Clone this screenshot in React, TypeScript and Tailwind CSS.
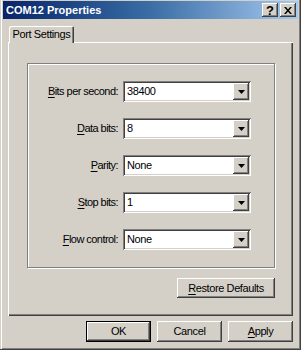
const raised =
  "bg-[#d4d0c8] shadow-[inset_-1px_-1px_#404040,inset_1px_1px_#ffffff,inset_-2px_-2px_#808080]"
const sunken =
  "bg-white shadow-[inset_1px_1px_#808080,inset_-1px_-1px_#ffffff,inset_2px_2px_#404040,inset_-2px_-2px_#d4d0c8]"

const font = { fontFamily: '"Liberation Sans", Arial, sans-serif' }

const Combo = ({ value }: { value: string }) => (
  <div className={`w-[128px] h-[21px] flex items-center p-[2px] ${sunken}`}>
    <span className="flex-1 pl-[2px] text-[11px] tracking-[-0.4px] leading-none text-black">{value}</span>
    <div className={`w-[16px] h-[17px] flex items-center justify-center ${raised}`}>
      <svg width="7" height="4" viewBox="0 0 7 4">
        <path d="M0 0h7L3.5 4z" fill="#000" />
      </svg>
    </div>
  </div>
)

const Row = ({ label, hot, value }: { label: string; hot: string; value: string }) => (
  <div className="flex items-center h-[21px]">
    <div className="w-[90px] text-right text-[11px] tracking-[-0.55px] leading-none text-black">
      <span className="underline underline-offset-2">{hot}</span>
      {label}
    </div>
    <div className="ml-[5px]">
      <Combo value={value} />
    </div>
  </div>
)

const Btn = ({ children, def }: { children: React.ReactNode; def?: boolean }) => (
  <div
    className={`w-[65px] h-[21px] flex items-center justify-center text-[11px] tracking-[-0.4px] text-black ${
      def
        ? "bg-[#d4d0c8] shadow-[inset_0_0_0_1px_#000000,inset_-2px_-2px_#404040,inset_2px_2px_#ffffff,inset_-3px_-3px_#808080]"
        : raised
    }`}
  >
    {children}
  </div>
)

export default function App() {
  return (
    <div
      className="w-[301px] h-[350px] bg-[#d4d0c8] flex flex-col pt-[1px] px-[3px] shadow-[inset_-1px_-1px_#404040,inset_1px_0_#d4d0c8,inset_2px_0_#ffffff,inset_-2px_-2px_#808080]"
      style={font}
    >
      {/* title bar */}
      <div className="h-[18px] flex items-center bg-gradient-to-r from-[#0a246a] via-[#3a6ea5] to-[#a6caf0] pl-[3px] pr-[2px]">
        <span className="flex-1 text-white font-bold text-[11px] leading-none">COM12 Properties</span>
        <div className={`w-[16px] h-[14px] flex items-center justify-center text-[13px] font-bold leading-none text-black ${raised}`}>
          ?
        </div>
        <div className={`ml-[2px] w-[16px] h-[14px] flex items-center justify-center ${raised}`}>
          <svg width="8" height="7" viewBox="0 0 8 7">
            <path d="M0 0h2l2 2.5L6 0h2L5 3.5 8 7H6L4 4.5 2 7H0l3-3.5z" fill="#000" />
          </svg>
        </div>
      </div>

      <div className="flex flex-col px-[5px]">
        {/* tab */}
        <div className="flex mt-[7px] relative z-10">
          <div className="ml-[1px] w-[65px] h-[17px] mb-[-1px] bg-[#d4d0c8] rounded-t-[2px] shadow-[inset_1px_1px_#ffffff,inset_-1px_0_#404040,inset_-2px_0_#808080] flex items-center justify-center text-[11px] tracking-[-0.4px] text-black">
            Port Settings
          </div>
        </div>

        {/* panel */}
        <div className="h-[274px] flex flex-col pt-[21px] pl-[19px] pr-[18px] shadow-[inset_1px_1px_#ffffff,inset_-1px_-1px_#404040,inset_-2px_-2px_#808080]">
          <div className="h-[205px] border border-[#808080] shadow-[1px_1px_#ffffff,inset_1px_1px_#ffffff] flex flex-col gap-[16px] pt-[17px]">
            <Row hot="B" label="its per second:" value="38400" />
            <Row hot="D" label="ata bits:" value="8" />
            <Row hot="P" label="arity:" value="None" />
            <Row hot="S" label="top bits:" value="1" />
            <Row hot="F" label="low control:" value="None" />
          </div>
          <div className="self-end mt-[10px]">
            <div className={`w-[98px] h-[20px] flex items-center justify-center text-[11px] tracking-[-0.4px] text-black ${raised}`}>
              <span>
                <span className="underline underline-offset-2">R</span>estore Defaults
              </span>
            </div>
          </div>
        </div>

        {/* buttons */}
        <div className="flex justify-end gap-[6px] mt-[5px]">
          <Btn def>OK</Btn>
          <Btn>Cancel</Btn>
          <Btn>
            <span>
              <span className="underline underline-offset-2">A</span>pply
            </span>
          </Btn>
        </div>
      </div>
    </div>
  )
}
